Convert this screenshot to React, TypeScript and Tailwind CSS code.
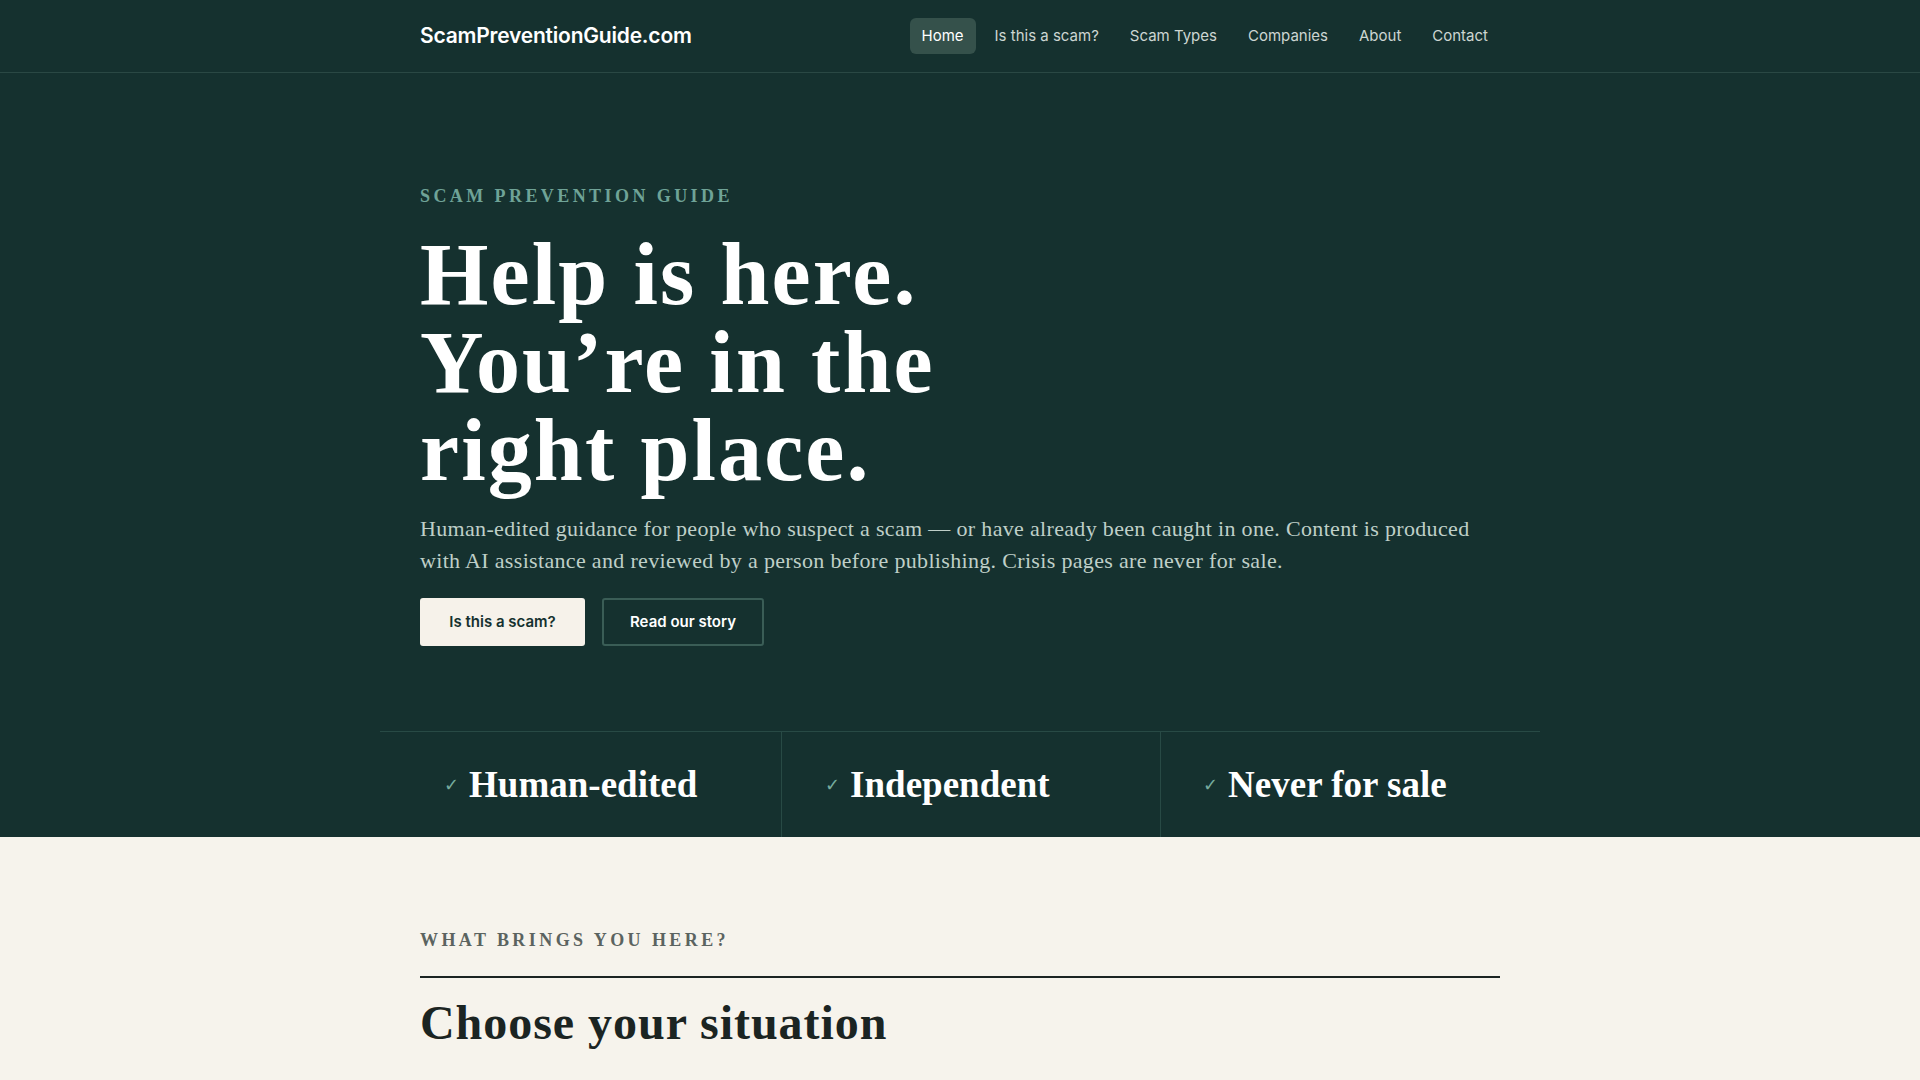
const serif = { fontFamily: '"Liberation Serif", "Times New Roman", serif' }

const navLinks = ['Home', 'Is this a scam?', 'Scam Types', 'Companies', 'About', 'Contact']

const promises = [
  { label: 'Human-edited', pad: 'pl-[64px]' },
  { label: 'Independent', pad: 'pl-[43px] border-l border-[#284a45]' },
  { label: 'Never for sale', pad: 'pl-[42px] border-l border-[#284a45]' },
]

function Header() {
  return (
    <header className="h-[73px] border-b border-[#2a4844]">
      <div className="mx-auto flex h-[72px] max-w-[1080px] items-center">
        <a className="text-[21px] font-semibold tracking-[-0.01em] text-white">ScamPreventionGuide.com</a>
        <nav className="ml-auto flex items-center gap-[7px]">
          {navLinks.map((link, i) => (
            <a
              key={link}
              className={
                i === 0
                  ? 'rounded-md bg-[#35514b] px-3 py-[7px] text-[15px] text-white'
                  : 'rounded-md px-3 py-[7px] text-[15px] text-[#cdd6d2]'
              }
            >
              {link}
            </a>
          ))}
        </nav>
      </div>
    </header>
  )
}

function Hero() {
  return (
    <section className="bg-[#15312f]">
      <div className="mx-auto max-w-[1080px] pt-[111px]">
        <p className="text-[18px] font-bold uppercase leading-6 tracking-[0.19em] text-[#6fa397]" style={serif}>
          Scam Prevention Guide
        </p>
        <h1 className="mt-[23px] text-[88px] font-bold leading-[88px] tracking-[0.024em] text-white" style={serif}>
          Help is here.
          <br />
          You’re in the
          <br />
          right place.
        </h1>
        <p className="mt-[18px] text-[22px] leading-8 tracking-[0.015em] text-[#bfcfc8]" style={serif}>
          Human-edited guidance for people who suspect a scam — or have already been caught in one. Content is produced
          <br />
          with AI assistance and reviewed by a person before publishing. Crisis pages are never for sale.
        </p>
        <div className="mt-[21px] flex gap-[17px]">
          <button className="h-12 w-[165px] rounded-[3px] bg-[#f6f2ea] text-[15px] font-semibold text-[#15312f]">
            Is this a scam?
          </button>
          <button className="h-12 w-[162px] rounded-[3px] border-2 border-[#3a5d56] text-[15px] font-semibold text-white">
            Read our story
          </button>
        </div>
      </div>

      <div className="mx-auto mt-[85px] grid max-w-[1160px] grid-cols-[401px_379px_1fr] border-t border-[#284a45]">
        {promises.map((p) => (
          <div key={p.label} className={`flex h-[105px] items-center ${p.pad}`}>
            <span
              className="text-[18px] font-bold leading-none text-[#76ab9e]"
              style={{ fontFamily: '"DejaVu Sans", sans-serif' }}
            >
              ✓
            </span>
            <span className="ml-[10px] text-[37px] font-bold leading-none text-white" style={serif}>
              {p.label}
            </span>
          </div>
        ))}
      </div>
    </section>
  )
}

function Situations() {
  return (
    <section className="bg-[#f6f3ec] pb-16">
      <div className="mx-auto max-w-[1080px] pt-[91px]">
        <p className="text-[18px] font-bold uppercase leading-6 tracking-[0.19em] text-[#5b6360]" style={serif}>
          What brings you here?
        </p>
        <div className="mt-[24px] border-t-2 border-[#1b2422]" />
        <h2 className="mt-[17px] text-[48px] font-bold leading-[56px] tracking-[0.02em] text-[#1b2422]" style={serif}>
          Choose your situation
        </h2>
        <div className="mt-[31px] border-t border-[#cfcac0]" />
        <div className="h-64" />
      </div>
    </section>
  )
}

export default function App() {
  return (
    <div className="min-h-screen bg-[#15312f]" style={{ fontFamily: 'Inter, "Liberation Sans", sans-serif' }}>
      <Header />
      <Hero />
      <Situations />
    </div>
  )
}
